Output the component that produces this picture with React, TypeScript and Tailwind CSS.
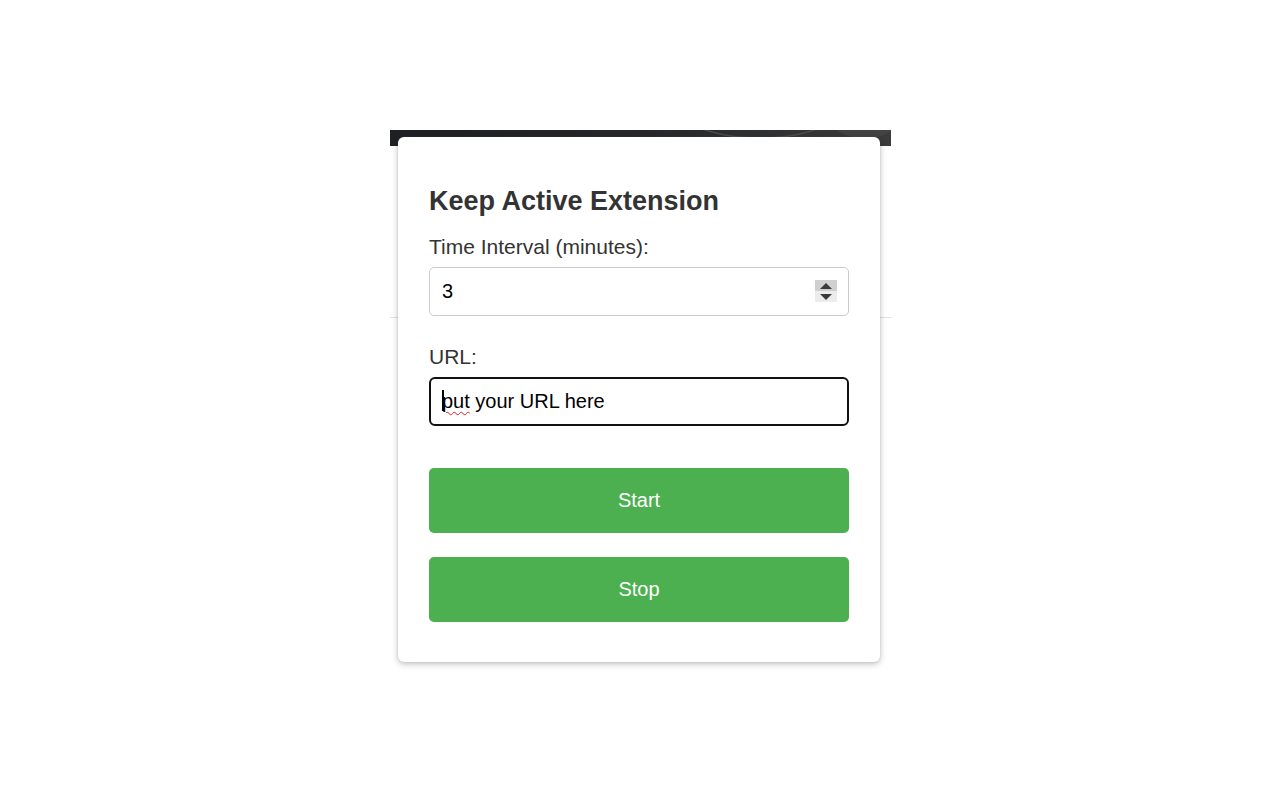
import React from 'react';

function Spinner() {
  return (
    <div className="absolute right-[12px] top-[13px] flex h-[22px] w-[22px] flex-col">
      <div className="flex h-[11px] items-center justify-center bg-[#cfcfcf]">
        <svg width="12" height="6" viewBox="0 0 12 6">
          <path d="M6 0 L12 6 L0 6 Z" fill="#3a3a3a" />
        </svg>
      </div>
      <div className="flex h-[11px] items-center justify-center bg-[#ececec]">
        <svg width="12" height="6" viewBox="0 0 12 6">
          <path d="M0 0 L12 0 L6 6 Z" fill="#3a3a3a" />
        </svg>
      </div>
    </div>
  );
}

export default function App() {
  return (
    <div className="min-h-[800px] w-full bg-white font-['Liberation_Sans',Arial,sans-serif]">
      <div className="flex justify-center pt-[130px]">
        {/* page behind the popup */}
        <div className="relative ml-[1px] w-[501px]">
          <div className="relative h-[16px] overflow-hidden bg-gradient-to-r from-[#1f2023] via-[#26272a] to-[#3b3b3b]">
            <svg className="absolute inset-0" width="501" height="16" viewBox="0 0 501 16">
              <ellipse cx="370" cy="-14" rx="70" ry="22" fill="none" stroke="#4a4a4a" strokeWidth="1.5" />
              <ellipse cx="475" cy="-10" rx="34" ry="18" fill="#4a4a4a" opacity="0.6" />
            </svg>
          </div>
          <div className="h-[171px]" />
          <div className="border-t border-[#e2e2e2]" />

          {/* popup card */}
          <div className="absolute left-[8px] top-[7px] w-[482px] rounded-[6px] bg-white px-[31px] pb-[40px] pt-[49px] shadow-[0_2px_6px_rgba(0,0,0,0.25),0_0_2px_rgba(120,150,160,0.25)]">
            <h2 className="mb-[18px] text-[27px] font-bold leading-[31px] text-[#333333]">
              Keep Active Extension
            </h2>

            <label className="mb-[8px] block text-[21px] leading-[24px] text-[#333333]">
              Time Interval (minutes):
            </label>
            <div className="relative">
              <input
                type="text"
                readOnly
                value="3"
                className="block h-[49px] w-full rounded-[5px] border border-[#cccccc] pl-[12px] text-[20px] text-black outline-none"
              />
              <Spinner />
            </div>

            <label className="mb-[8px] mt-[29px] block text-[21px] leading-[24px] text-[#333333]">
              URL:
            </label>
            <div className="flex h-[49px] w-full items-center rounded-[6px] border-2 border-[#111111] pb-[2px] pl-[11px] text-[20px] text-black">
              <span className="-mr-[2px] inline-block h-[21px] w-[2px] bg-black" />
              <span className="underline decoration-[#e02020] decoration-wavy decoration-1 underline-offset-[3px]">put</span>
              <span>&nbsp;your URL here</span>
            </div>

            <button className="mt-[42px] flex h-[65px] w-full items-center justify-center rounded-[5px] bg-[#4caf50] pb-[2px] text-[20px] text-white">
              Start
            </button>
            <button className="mt-[24px] flex h-[65px] w-full items-center justify-center rounded-[5px] bg-[#4caf50] pb-[2px] text-[20px] text-white">
              Stop
            </button>
          </div>
        </div>
      </div>
    </div>
  );
}
